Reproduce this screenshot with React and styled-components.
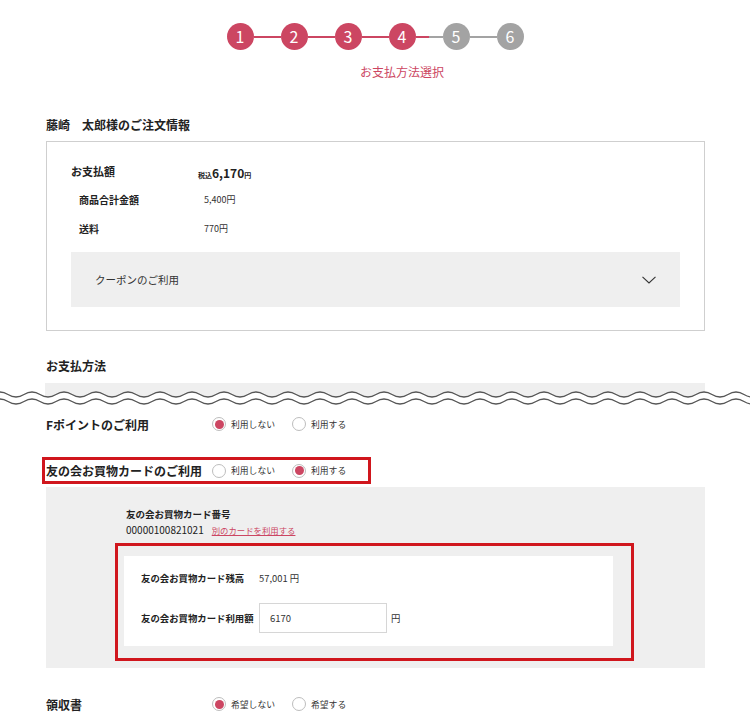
import React from 'react'
import styled, { createGlobalStyle } from 'styled-components'

const RED = '#cc4662'
const ALERT = '#d0161d'
const INK = '#222'

const GlobalStyle = createGlobalStyle`
  html, body {
    margin: 0;
    padding: 0;
    background: #fff;
  }
  body {
    font-family: "Noto Sans CJK JP", "Noto Sans", sans-serif;
    color: ${INK};
  }
`

const Page = styled.div`
  width: 750px;
  padding-top: 23px;
  padding-bottom: 20px;
`

const Stepper = styled.ol`
  list-style: none;
  margin: 0;
  padding: 0;
  display: flex;
  justify-content: center;
  align-items: flex-start;
`

const Step = styled.li`
  width: 27px;
  display: flex;
  flex-direction: column;
  align-items: center;
`

const Circle = styled.span`
  width: 27px;
  height: 27px;
  border-radius: 50%;
  background: ${(p) => (p.done ? RED : '#a3a3a3')};
  color: #fff;
  font-size: 16px;
  line-height: 27px;
  text-align: center;
`

const StepLabel = styled.span`
  margin-top: 15px;
  font-size: 12px;
  line-height: 14px;
  color: ${RED};
  white-space: nowrap;
`

const Connector = styled.li`
  width: 27px;
  height: 2px;
  margin-top: 12.5px;
  background: ${(p) =>
    p.state === 'done'
      ? RED
      : p.state === 'half'
        ? `linear-gradient(to right, ${RED} 50%, #a3a3a3 50%)`
        : '#a3a3a3'};
`

const Container = styled.div`
  margin-left: 46px;
  width: 659px;
`

const SectionTitle = styled.h2`
  margin: ${(p) => p.top || 0}px 0 0;
  font-size: 12px;
  font-weight: 700;
  line-height: 18px;
`

const OrderBox = styled.div`
  margin-top: 7px;
  border: 1px solid #cfcfcf;
  padding: 14px 24px 23px;
`

const SummaryRow = styled.div`
  display: grid;
  grid-template-columns: ${(p) => (p.sub ? '125px' : '127px')} 1fr;
  padding-left: ${(p) => (p.sub ? 8 : 0)}px;
  height: 29px;
  align-items: center;
`

const SummaryLabel = styled.span`
  font-size: ${(p) => (p.sub ? 10 : 11)}px;
  font-weight: 700;
`

const SummaryValue = styled.span`
  font-size: 9px;
  color: #333;
`

const Small = styled.span`
  font-size: 7px;
  font-weight: 700;
`

const Total = styled.span`
  font-size: 12px;
  font-weight: 700;
`

const CouponBar = styled.div`
  margin-top: 9px;
  height: 55px;
  background: #efefef;
  display: flex;
  align-items: center;
  justify-content: space-between;
  padding: 0 24px;
  font-size: 10.5px;
  color: #333;
`

const WaveWrap = styled.div`
  margin-top: 8px;
  height: 24px;
  line-height: 0;
`

const OptionRow = styled.div`
  display: flex;
  align-items: center;
  height: 28px;
  margin-top: ${(p) => p.top || 0}px;
`

const HighlightRow = styled(OptionRow)`
  width: 329px;
  height: 27px;
  box-sizing: border-box;
  border: 3px solid ${ALERT};
  margin-left: -4px;
  padding-left: 1px;
`

const OptionLabel = styled.span`
  flex: 0 0 166px;
  font-size: 12px;
  font-weight: 700;
  white-space: nowrap;
`

const Choice = styled.label`
  flex: 0 0 auto;
  width: 80px;
  display: flex;
  align-items: center;
  gap: 5px;
  font-size: 8.8px;
  color: #333;
  &:last-child {
    width: auto;
  }
`

const Radio = styled.span`
  width: 14px;
  height: 14px;
  box-sizing: border-box;
  border-radius: 50%;
  border: 1px solid #bdbdbd;
  background: #fff;
  display: flex;
  align-items: center;
  justify-content: center;
  &::after {
    content: '';
    width: 9px;
    height: 9px;
    border-radius: 50%;
    background: ${(p) => (p.checked ? RED : 'transparent')};
  }
`

const CardPanel = styled.div`
  margin-top: 3px;
  background: #efefef;
  padding: 20px 71px 7px 69px;
`

const CardInfo = styled.div`
  padding-left: 11px;
`

const CardTitle = styled.div`
  font-size: 9.5px;
  font-weight: 700;
  line-height: 14px;
`

const CardNumber = styled.div`
  margin-top: 2px;
  font-size: 10px;
  line-height: 14px;
  display: flex;
  gap: 8px;
  align-items: baseline;
`

const ChangeLink = styled.a`
  font-size: 8.4px;
  color: ${RED};
  text-decoration: underline;
`

const AlertBox = styled.div`
  margin-top: 6px;
  border: 3px solid ${ALERT};
  padding: 10px 18px 12px 6px;
`

const BalanceCard = styled.div`
  background: #fff;
  padding: 15px 17px 13px;
  display: flex;
  flex-direction: column;
  gap: 18px;
`

const BalanceRow = styled.div`
  display: flex;
  align-items: center;
  font-size: 9.4px;
`

const BalanceLabel = styled.span`
  flex: 0 0 118px;
  font-weight: 700;
  line-height: 14px;
  white-space: nowrap;
`

const BalanceValue = styled.span`
  color: #333;
`

const AmountInput = styled.input`
  width: 128px;
  height: 30px;
  box-sizing: border-box;
  border: 1px solid #d6d6d6;
  padding: 0 10px;
  font-family: inherit;
  font-size: 9.5px;
  color: #333;
  outline: none;
  margin-right: 4px;
`

function Wave() {
  const P = 32
  const A = 2.5
  const line = (y) => {
    let d = `M${-P / 4},${y}`
    d += ` q${P / 4},${-2 * A} ${P / 2},0`
    for (let x = P / 4; x < 760; x += P / 2) d += ` t${P / 2},0`
    return d
  }
  return (
    <svg width="750" height="24" viewBox="0 0 750 24">
      <defs>
        <clipPath id="band">
          <rect x="45" y="0" width="660" height="24" />
        </clipPath>
      </defs>
      <path
        d={`${line(11.5)} L770,0 L-10,0 Z`}
        fill="#efefef"
        clipPath="url(#band)"
      />
      <path d={line(11.5)} fill="none" stroke="#555" strokeWidth="1.3" />
      <path d={line(18.5)} fill="none" stroke="#555" strokeWidth="1.3" />
    </svg>
  )
}

function Chevron() {
  return (
    <svg width="14" height="8" viewBox="0 0 14 8">
      <path d="M0.5 0.8 L7 7 L13.5 0.8" fill="none" stroke="#333" strokeWidth="1.1" />
    </svg>
  )
}

function Choices({ options, selected }) {
  return options.map((o, i) => (
    <Choice key={o}>
      <Radio checked={i === selected} />
      {o}
    </Choice>
  ))
}

const steps = [1, 2, 3, 4, 5, 6]
const current = 4

export default function App() {
  const stepItems = []
  steps.forEach((n, i) => {
    if (i > 0) {
      const state = n <= current ? 'done' : n === current + 1 ? 'half' : 'todo'
      stepItems.push(<Connector key={`c${n}`} state={state} />)
    }
    stepItems.push(
      <Step key={n}>
        <Circle done={n <= current}>{n}</Circle>
        {n === current && <StepLabel>お支払方法選択</StepLabel>}
      </Step>,
    )
  })

  return (
    <Page>
      <GlobalStyle />
      <Stepper>{stepItems}</Stepper>
      <Container>
        <SectionTitle top={37}>藤崎　太郎様のご注文情報</SectionTitle>
        <OrderBox>
          <SummaryRow>
            <SummaryLabel>お支払額</SummaryLabel>
            <span>
              <Small>税込</Small>
              <Total>6,170</Total>
              <Small>円</Small>
            </span>
          </SummaryRow>
          <SummaryRow sub>
            <SummaryLabel sub>商品合計金額</SummaryLabel>
            <SummaryValue>5,400円</SummaryValue>
          </SummaryRow>
          <SummaryRow sub>
            <SummaryLabel sub>送料</SummaryLabel>
            <SummaryValue>770円</SummaryValue>
          </SummaryRow>
          <CouponBar>
            <span>クーポンのご利用</span>
            <Chevron />
          </CouponBar>
        </OrderBox>
        <SectionTitle top={26}>お支払方法</SectionTitle>
      </Container>
      <WaveWrap>
        <Wave />
      </WaveWrap>
      <Container>
        <OptionRow top={3}>
          <OptionLabel>Fポイントのご利用</OptionLabel>
          <Choices options={['利用しない', '利用する']} selected={0} />
        </OptionRow>
        <HighlightRow top={19}>
          <OptionLabel>友の会お買物カードのご利用</OptionLabel>
          <Choices options={['利用しない', '利用する']} selected={1} />
        </HighlightRow>
        <CardPanel>
          <CardInfo>
            <CardTitle>友の会お買物カード番号</CardTitle>
            <CardNumber>
              00000100821021
              <ChangeLink href="#">別のカードを利用する</ChangeLink>
            </CardNumber>
          </CardInfo>
          <AlertBox>
            <BalanceCard>
              <BalanceRow>
                <BalanceLabel>友の会お買物カード残高</BalanceLabel>
                <BalanceValue>57,001 円</BalanceValue>
              </BalanceRow>
              <BalanceRow>
                <BalanceLabel>友の会お買物カード利用額</BalanceLabel>
                <AmountInput defaultValue="6170" />
                <BalanceValue>円</BalanceValue>
              </BalanceRow>
            </BalanceCard>
          </AlertBox>
        </CardPanel>
        <OptionRow top={22}>
          <OptionLabel>領収書</OptionLabel>
          <Choices options={['希望しない', '希望する']} selected={0} />
        </OptionRow>
      </Container>
    </Page>
  )
}
